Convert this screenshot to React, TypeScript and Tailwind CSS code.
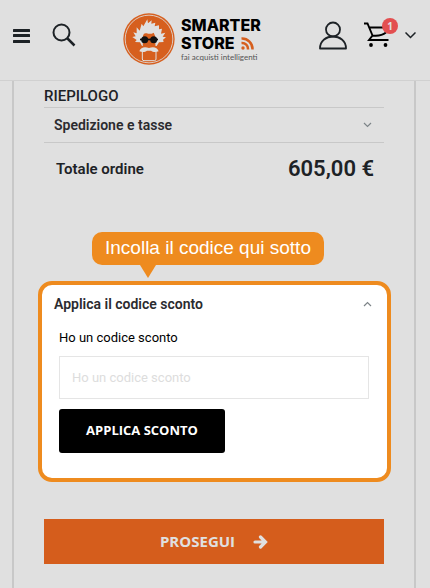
import React from "react";

function Chevron({ up = false }: { up?: boolean }) {
  return (
    <svg width="9" height="6" viewBox="0 0 9 6" fill="none" stroke="#7d8488" strokeWidth="1.2" aria-hidden="true">
      <path d={up ? "M1 5 4.500 1.500 8 5" : "M1 1 4.500 4.500 8 1"} />
    </svg>
  );
}

function LogoMark() {
  return (
    <svg className="h-[52px] w-[52px] shrink-0" viewBox="25 25 156 156" aria-hidden="true">
      <circle cx="103" cy="103" r="77" fill="#d65f1e" />
      <circle cx="103" cy="103" r="71.500" fill="none" stroke="#e0e0e0" strokeWidth="2.500" />
      <path
        fill="#e0e0e0"
        d="M82 124 76 113 61 112 66 106 53 97 63 95 56 83 66 86 66 68 75 78 81 57 86 65 98 44 100 56 111 47 110 57 122 54 120 65 133 62 133 74 142 72 139 87 152 84 144 96 154 98 145 105 147 112 133 113 126 124Z"
      />
      <path fill="#d65f1e" d="M85 93Q87 84 96 86 108 90 117 84L121 93 123 134H84Z" />
      <path fill="#d65f1e" stroke="#e0e0e0" strokeWidth="3" d="M83 136V163Q83 168 88 168H119Q124 168 124 163V136" />
      <path fill="#e0e0e0" d="M74 140C78 127 91 125 103 130 115 125 128 127 132 140 122 144 114 142 109 138H97C92 142 84 144 74 140Z" />
      <path fill="#111111" d="M76 102H130V107H76Z" />
      <circle cx="90" cy="105" r="10.500" fill="#111111" />
      <circle cx="117" cy="105" r="10.500" fill="#111111" />
    </svg>
  );
}

function Header() {
  return (
    <header className="flex h-[81px] items-start border-b border-[#d0d0d0] pl-[13px] pr-[14px]">
      <button type="button" aria-label="Menu" className="mt-7">
        <svg width="17" height="16" viewBox="0 0 17 16" fill="#1d2226" aria-hidden="true">
          <rect y="1" width="17" height="3" rx="0.500" />
          <rect y="6" width="17" height="3" rx="0.500" />
          <rect y="12" width="17" height="3" rx="0.500" />
        </svg>
      </button>
      <button type="button" aria-label="Cerca" className="ml-[22px] mt-[23px]">
        <svg width="24" height="24" viewBox="0 0 24 24" fill="none" stroke="#1d2226" strokeWidth="2" aria-hidden="true">
          <circle cx="9.500" cy="9.500" r="8" />
          <path d="m15 15 7.500 7.500" strokeWidth="2.500" />
        </svg>
      </button>
      <a href="#" aria-label="Smarter Store" className="ml-[47px] mt-[13px] flex">
        <LogoMark />
        <span className="ml-[6px] mt-[3px] block whitespace-nowrap">
          <span className="block font-[Inter,sans-serif] text-[16px] font-extrabold leading-[18px] text-black">SMARTER</span>
          <span className="flex items-center font-[Inter,sans-serif] text-[16px] font-extrabold leading-[18px] text-black">
            STORE
            <svg className="ml-[6px]" width="13" height="13" viewBox="0 0 13 13" fill="none" stroke="#d65f1e" strokeWidth="2.500" aria-hidden="true">
              <path d="M0.500 1.500A10.500 10.500 0 0 1 11.500 12.500M0.500 6A6 6 0 0 1 7 12.500" />
              <circle cx="2" cy="11" r="1.700" fill="#d65f1e" stroke="none" />
            </svg>
          </span>
          <span className="block font-[Lato,sans-serif] text-[8px] leading-[11px] text-[#555555]">fai acquisti intelligenti</span>
        </span>
      </a>
      <div className="ml-auto flex items-start">
        <button type="button" aria-label="Account" className="mt-[21px]">
          <svg width="28" height="29" viewBox="0 0 28 29" fill="none" stroke="#1d2226" strokeWidth="1.800" aria-hidden="true">
            <circle cx="14" cy="8.500" r="7" />
            <path d="M1 27.500C1 11.500 27 11.500 27 27.500Z" strokeLinejoin="round" />
          </svg>
        </button>
        <button type="button" aria-label="Carrello" className="relative ml-[17px] mt-[22px]">
          <svg width="26" height="26" viewBox="0 0 26 26" fill="none" stroke="#000000" strokeWidth="1.900" aria-hidden="true">
            <path d="M0 1.500H3.500L8.500 13.500 5 18H24.500M5 5.500H22M8.500 13.500Q17 14.500 22 10.500" />
            <circle cx="7" cy="23" r="1.900" fill="#000000" stroke="none" />
            <circle cx="21.500" cy="23" r="1.900" fill="#000000" stroke="none" />
          </svg>
          <span className="absolute -right-2 -top-1 h-4 w-4 rounded-full bg-[#e34f50] text-center font-['Open_Sans',sans-serif] text-[10px] font-bold leading-4 text-[#e0e0e0]">
            1
          </span>
        </button>
        <button type="button" aria-label="Apri carrello" className="ml-[15px] mt-8">
          <svg width="11" height="7" viewBox="0 0 11 7" fill="none" stroke="#1d2226" strokeWidth="1.500" aria-hidden="true">
            <path d="m0.500 0.500 5 5 5-5" />
          </svg>
        </button>
      </div>
    </header>
  );
}

export default function App() {
  return (
    <div className="flex min-h-screen flex-col bg-[#e0e0e0] font-[Roboto,sans-serif] text-[#1d2226]">
      <Header />
      <main className="ml-3 mr-[14px] grow border-x-2 border-[#c8c8c8] px-[30px] pb-6">
        <h2 className="pt-1 text-[15px] font-medium leading-[22px]">RIEPILOGO</h2>
        <button
          type="button"
          className="flex h-9 w-full items-center justify-between border-y border-[#c8c8c8] pl-[10px] pr-3 text-[14px] font-semibold text-[#2b2b2f]"
        >
          Spedizione e tasse
          <Chevron />
        </button>
        <div className="flex h-[52px] items-center justify-between pl-3 pr-[10px] font-semibold">
          <span className="text-[15px]">Totale ordine</span>
          <span className="text-[22px] leading-6">605,00 €</span>
        </div>

        <div className="relative ml-12 mt-[37px] h-[33px] w-fit whitespace-nowrap rounded-[10px] bg-[#ee8b1f] px-[13px] font-['Liberation_Sans',Arial,sans-serif] text-[19px] leading-[31px] text-white">
          Incolla il codice qui sotto
          <svg className="absolute left-12 top-full" width="16" height="13" viewBox="0 0 16 13" fill="#ee8b1f" aria-hidden="true">
            <path d="M0 0H16L8 13Z" />
          </svg>
        </div>

        <section className="-ml-[6px] -mr-[7px] mt-4 rounded-[14px] border-4 border-[#ee8b1f] bg-white pb-[25px]">
          <button
            type="button"
            aria-expanded="true"
            className="flex h-[38px] w-full items-center justify-between pl-3 pr-[15px] text-[14px] font-semibold text-[#2b2b2f]"
          >
            Applica il codice sconto
            <Chevron up />
          </button>
          <form className="pl-[17px] pr-[18px]" onSubmit={(event) => event.preventDefault()}>
            <label htmlFor="coupon" className="block h-[33px] text-[13px] leading-[30px] text-black">
              Ho un codice sconto
            </label>
            <input
              id="coupon"
              type="text"
              placeholder="Ho un codice sconto"
              className="block h-[43px] w-full border border-[#e5e5e5] bg-white px-3 text-[13px] text-black placeholder:text-[#dddddd]"
            />
            <button
              type="submit"
              className="mt-[10px] h-11 w-[166px] rounded-[3px] bg-black font-['Open_Sans',sans-serif] text-[13px] font-bold text-white"
            >
              APPLICA SCONTO
            </button>
          </form>
        </section>

        <button
          type="button"
          className="mt-[37px] flex h-[45px] w-full items-center justify-center gap-[18px] bg-[#d55d1c] font-['Open_Sans',sans-serif] text-[15px] font-bold text-[#e0e0e0]"
        >
          PROSEGUI
          <svg width="15" height="14" viewBox="0 0 15 14" fill="none" stroke="#e0e0e0" strokeWidth="3.200" strokeLinecap="round" aria-hidden="true">
            <path d="M2 7H12M7.500 2 12.500 7 7.500 12" />
          </svg>
        </button>
      </main>
    </div>
  );
}
